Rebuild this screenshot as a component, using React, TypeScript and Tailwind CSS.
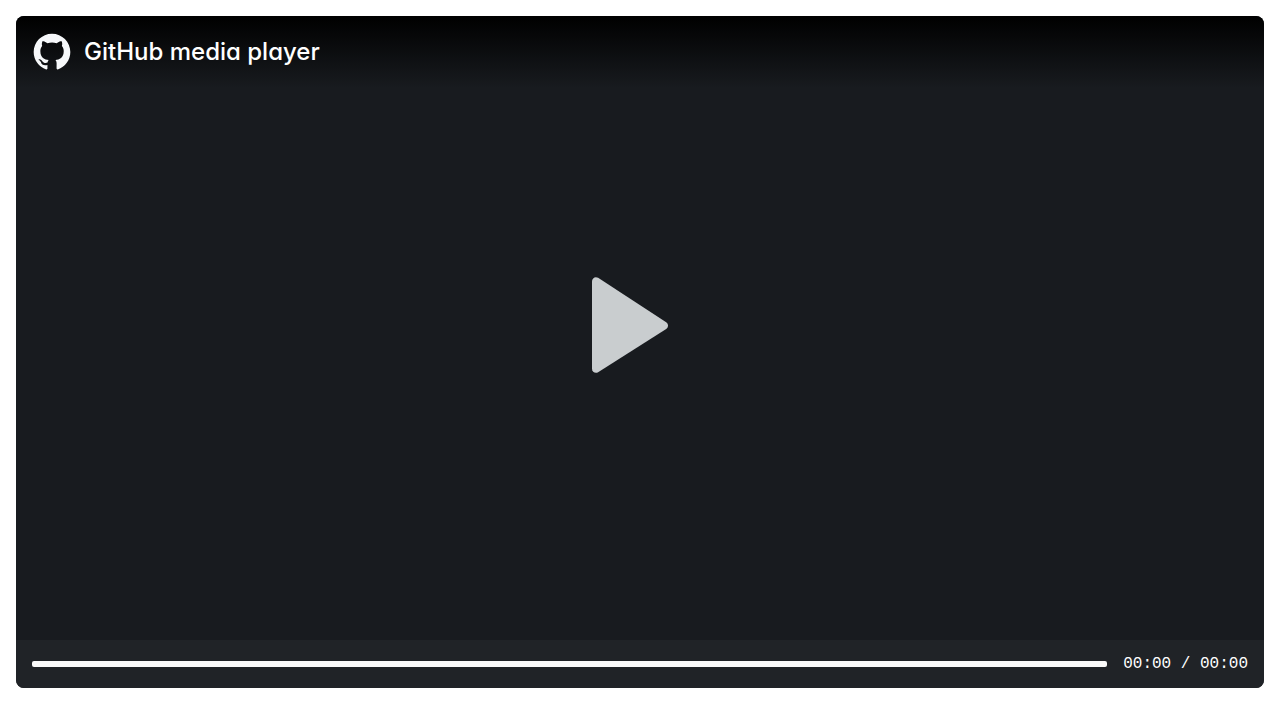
function GitHubMark() {
  return (
    <svg viewBox="0 0 24 24" className="size-10 shrink-0 text-[#f6f8fa]" fill="currentColor" aria-hidden="true">
      <path d="M12 1C5.9225 1 1 5.9225 1 12C1 16.8675 4.14875 20.9787 8.52125 22.4362C9.07125 22.5325 9.2775 22.2025 9.2775 21.9137C9.2775 21.6525 9.26375 20.7862 9.26375 19.865C6.5 20.3737 5.785 19.1912 5.565 18.5725C5.44125 18.2562 4.905 17.28 4.4375 17.0187C4.0525 16.8125 3.5025 16.3037 4.42375 16.29C5.29 16.2762 5.90875 17.0875 6.115 17.4175C7.105 19.0812 8.68625 18.6137 9.31875 18.325C9.415 17.61 9.70375 17.1287 10.02 16.8537C7.5725 16.5787 5.015 15.63 5.015 11.4225C5.015 10.2262 5.44125 9.23625 6.1425 8.46625C6.0325 8.19125 5.6475 7.06375 6.2525 5.55125C6.2525 5.55125 7.17375 5.2625 9.2775 6.67875C10.1575 6.43125 11.0925 6.3075 12.0275 6.3075C12.9625 6.3075 13.8975 6.43125 14.7775 6.67875C16.8813 5.24875 17.8025 5.55125 17.8025 5.55125C18.4075 7.06375 18.0225 8.19125 17.9125 8.46625C18.6138 9.23625 19.04 10.2125 19.04 11.4225C19.04 15.6437 16.4688 16.5787 14.0213 16.8537C14.42 17.1975 14.7638 17.8575 14.7638 18.8887C14.7638 20.36 14.75 21.5425 14.75 21.9137C14.75 22.2025 14.9563 22.5462 15.5063 22.4362C19.8513 20.9787 23 16.8537 23 12C23 5.9225 18.0775 1 12 1Z" />
    </svg>
  );
}

function PlayIcon() {
  return (
    <svg viewBox="0 0 96 96" className="size-24" fill="currentColor" aria-hidden="true">
      <path d="M0 4.2C0 1 3.4-.9 6.100.8L74.200 45.200C76.600 46.800 76.600 50.400 74.200 52L6.100 95.200C3.400 96.900 0 95 0 91.800Z" />
    </svg>
  );
}

function Header() {
  return (
    <header className="flex items-center gap-3 bg-linear-to-b/srgb from-black to-[#181b1f] p-4">
      <GitHubMark />
      <h1 className="text-2xl leading-10 font-medium [font-feature-settings:'cv11']">
        GitHub media player
      </h1>
    </header>
  );
}

function Controls() {
  return (
    <div className="flex h-12 items-center gap-4 bg-[#202327] px-4">
      <input
        type="range"
        aria-label="Seek"
        min={0}
        max={100}
        defaultValue={0}
        className="h-1.5 min-w-0 flex-1 cursor-pointer appearance-none rounded-xs bg-[#fafafa] [&::-webkit-slider-thumb]:size-0 [&::-webkit-slider-thumb]:appearance-none"
      />
      <time className="font-['Liberation_Mono',monospace] text-base whitespace-pre">
        00:00 / 00:00
      </time>
    </div>
  );
}

export default function App() {
  return (
    <main className="flex h-screen bg-white p-4 pb-8 font-['Inter',sans-serif] text-white">
      <section
        aria-label="Media player"
        className="flex flex-1 flex-col overflow-hidden rounded-lg bg-[#181b1f]"
      >
        <Header />
        <button
          type="button"
          aria-label="Play"
          className="flex flex-1 cursor-pointer items-center justify-center pb-[78px] text-[#c9cdcf]"
        >
          <PlayIcon />
        </button>
        <Controls />
      </section>
    </main>
  );
}
